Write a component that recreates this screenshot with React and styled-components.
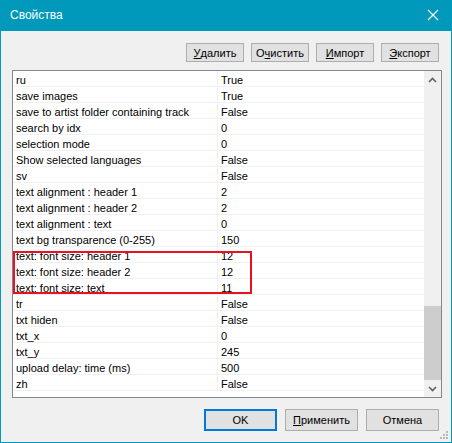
import React from 'react';
import styled, { createGlobalStyle } from 'styled-components';

const GlobalStyle = createGlobalStyle`
  html, body {
    margin: 0;
    padding: 0;
    background: #f0f0f0;
  }
  * { box-sizing: border-box; }
`;

const rows = [
  ['ru', 'True'],
  ['save images', 'True'],
  ['save to artist folder containing track', 'False'],
  ['search by idx', '0'],
  ['selection mode', '0'],
  ['Show selected languages', 'False'],
  ['sv', 'False'],
  ['text alignment : header 1', '2'],
  ['text alignment : header 2', '2'],
  ['text alignment : text', '0'],
  ['text bg transparence (0-255)', '150'],
  ['text: font size: header 1', '12'],
  ['text: font size: header 2', '12'],
  ['text: font size: text', '11'],
  ['tr', 'False'],
  ['txt hiden', 'False'],
  ['txt_x', '0'],
  ['txt_y', '245'],
  ['upload delay: time (ms)', '500'],
  ['zh', 'False'],
];

const Window = styled.div`
  position: relative;
  width: 452px;
  height: 443px;
  display: flex;
  flex-direction: column;
  background: #f0f0f0;
  border: 1px solid #0099bc;
  border-top: none;
  font-family: "Liberation Sans", Arial, sans-serif;
  font-size: 11px;
  color: #000;
`;

const TitleBar = styled.div`
  height: 31px;
  margin: 0 -1px;
  background: #0099bc;
  color: #fff;
  display: flex;
  align-items: center;
  justify-content: space-between;
  padding: 0 9px 1px 10px;
  font-size: 12px;
`;

const CloseIcon = styled.svg`
  width: 12px;
  height: 12px;
  margin-right: 4px;
`;

const Toolbar = styled.div`
  display: flex;
  justify-content: flex-end;
  gap: 7px;
  padding: 12px 12px 0 0;
`;

const Button = styled.button`
  width: ${p => p.$w || 58}px;
  height: ${p => p.$h || 19}px;
  padding: 0;
  background: #e1e1e1;
  border: ${p => (p.$default ? '2px solid #0078d7' : '1px solid #adadad')};
  font-family: inherit;
  font-size: 11px;
  color: #000;
  display: flex;
  align-items: center;
  justify-content: center;
  u { text-decoration: underline; }
`;

const List = styled.div`
  position: relative;
  margin: 8px 0 0 11px;
  width: 430px;
  height: 328px;
  border: 1px solid #828790;
  background: #fff;
  display: flex;
`;

const Rows = styled.div`
  position: relative;
  flex: 1;
  overflow: hidden;
`;

const Row = styled.div`
  display: grid;
  grid-template-columns: 205px 1fr;
  height: 16px;
  border-bottom: 1px solid #f0f0f0;
`;

const Cell = styled.div`
  padding: 3px 0 0 3px;
  line-height: 12px;
  white-space: nowrap;
  overflow: hidden;
  border-right: ${p => (p.$first ? '1px solid #f0f0f0' : 'none')};
`;

const Highlight = styled.div`
  position: absolute;
  left: 0;
  top: 180px;
  width: 239px;
  height: 43px;
  border: 2px solid #e81123;
  pointer-events: none;
`;

const ScrollBar = styled.div`
  width: 17px;
  background: #f0f0f0;
  display: flex;
  flex-direction: column;
`;

const ScrollArrow = styled.div`
  height: 17px;
  display: flex;
  align-items: center;
  justify-content: center;
`;

const Track = styled.div`
  flex: 1;
  display: flex;
  flex-direction: column;
  justify-content: flex-end;
`;

const Thumb = styled.div`
  height: 74px;
  background: #cdcdcd;
`;

const Footer = styled.div`
  display: flex;
  justify-content: flex-end;
  gap: 8px;
  padding: 11px 12px 0 0;
`;

const Grip = styled.svg`
  position: absolute;
  right: 3px;
  bottom: 3px;
  width: 8px;
  height: 8px;
`;

const Chevron = ({ up }) => (
  <svg width="9" height="6" viewBox="0 0 9 6">
    <path
      d={up ? 'M1 5 L4.5 1.5 L8 5' : 'M1 1 L4.5 4.5 L8 1'}
      fill="none"
      stroke="#606060"
      strokeWidth="1.6"
    />
  </svg>
);

export default function App() {
  return (
    <>
      <GlobalStyle />
      <Window>
        <TitleBar>
          <span>Свойства</span>
          <CloseIcon viewBox="0 0 12 12">
            <path d="M1 1 L11 11 M11 1 L1 11" stroke="#fff" strokeWidth="1.2" />
          </CloseIcon>
        </TitleBar>

        <Toolbar>
          <Button><u>У</u>далить</Button>
          <Button>О<u>ч</u>истить</Button>
          <Button><u>И</u>мпорт</Button>
          <Button><u>Э</u>кспорт</Button>
        </Toolbar>

        <List>
          <Rows>
            {rows.map(([name, value]) => (
              <Row key={name}>
                <Cell $first>{name}</Cell>
                <Cell>{value}</Cell>
              </Row>
            ))}
            <Highlight />
          </Rows>
          <ScrollBar>
            <ScrollArrow><Chevron up /></ScrollArrow>
            <Track><Thumb /></Track>
            <ScrollArrow><Chevron /></ScrollArrow>
          </ScrollBar>
        </List>

        <Footer>
          <Button $w={73} $h={22} $default>OK</Button>
          <Button $w={73} $h={22}><u>П</u>рименить</Button>
          <Button $w={73} $h={22}>Отмена</Button>
        </Footer>

        <Grip viewBox="0 0 8 8">
          {[[6, 0], [3, 3], [6, 3], [0, 6], [3, 6], [6, 6]].map(([x, y]) => (
            <rect key={`${x}-${y}`} x={x} y={y} width="2" height="2" fill="#b8b8b8" />
          ))}
        </Grip>
      </Window>
    </>
  );
}
